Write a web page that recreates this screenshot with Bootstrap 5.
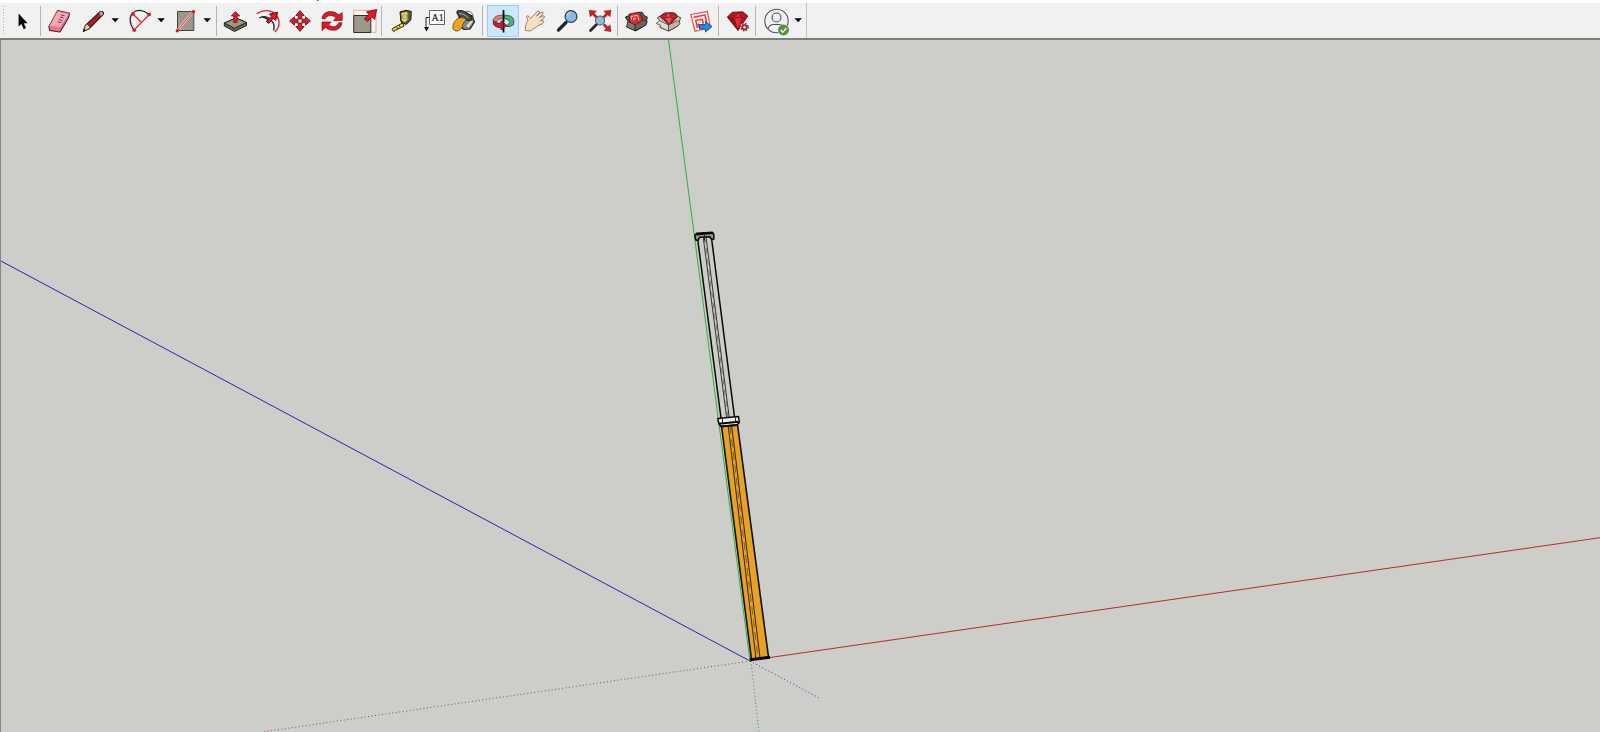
<!DOCTYPE html>
<html lang="en">
<head>
<meta charset="utf-8">
<meta name="viewport" content="width=device-width, initial-scale=1">
<title>3D modeling workspace</title>
<link href="https://cdn.jsdelivr.net/npm/bootstrap@5.3.0/dist/css/bootstrap.min.css" rel="stylesheet">
<style>
body{background:#cdcdc9;font-family:"Liberation Sans",sans-serif}
.topstrip{height:3px;background:#fff}
.toolbar{height:37px;background:#f1f1f1;border-bottom:2px solid #7d7d7c}
.grip{width:6px;height:31px;background:radial-gradient(circle,#aaa 0 .8px,transparent 1px) 2px 0/3px 3px repeat-y}
.tool{width:32px;height:32px;padding:0;border:0;border-radius:0;flex:none;background:transparent;line-height:0}
.tool.spaced{margin-left:1px}
.tool.active{background:#cce6fc;box-shadow:inset 0 0 0 1px #9dcdf5}
.drop{width:14px;height:32px;padding:0;border:0;flex:none;background:transparent;line-height:0}
.rule{width:5px;height:30px;flex:none;background:linear-gradient(#b5b5b5,#b5b5b5) 2px 0/1px 100% no-repeat}
.rule.wide{width:7px}
.tail{width:3px;height:35px;border-right:1px solid #c3c3c3}
.view{height:692px;border-left:1px solid #858585}
svg{display:block}
</style>
</head>
<body class="overflow-hidden vh-100 d-flex flex-column">
<svg width="0" height="0" class="position-absolute"><defs>
<symbol id="caret" viewBox="0 0 14 32"><path d="M3.500 13.200h7.400L7.200 17.200z" fill="#000"/></symbol>
<path id="arrowUp" d="M0-10.5 4.200-5.500H1.800V-2H-1.800V-5.500H-4.200z"/>
</defs></svg>
<div class="topstrip flex-shrink-0"><svg width="400" height="3"><path d="M317 0h1.500v1H317z" fill="#555"/></svg></div>
<header class="toolbar d-flex align-items-center flex-shrink-0" role="toolbar">
<div class="grip"></div>
<button class="tool" aria-label="Select"><svg width="32" height="32" viewBox="6 5 32 32"><path d="M18.600 13.500V26.600L21.400 24 23.800 29.200 26 28 23.700 23.200H27.500z"/></svg></button>
<div class="rule"></div>
<button class="tool" aria-label="Eraser"><svg width="32" height="32" viewBox="43 5 32 32" stroke="#56242f" stroke-linejoin="round"><path d="M49 26.500 57.500 10.700 69.700 13.400 68.300 18 60 32 49.600 30.400z" fill="#f4738b" stroke-width="1.200"/><path d="M49.400 26.300 57.500 11 69.300 13.700 60.500 27.700z" fill="#fba6b5" stroke="#c8667a" stroke-width=".6"/><path d="M57.500 22l4 .6M58.700 19.700l4 .8M60 17.400q2.500-1 3.500 1M61 15l3.500.6" fill="none" stroke-width=".8"/></svg></button>
<button class="tool spaced" aria-label="Line"><svg width="32" height="32" viewBox="76 5 32 32" stroke-linejoin="round"><path d="M83.400 31.300 85.400 25.500 100 11.800Q103.700 10.600 103.500 14L88.800 29z" fill="#bf1921" stroke="#32211d" stroke-width="1.200"/><path d="M83.400 31.300 85.400 25.500 87 24 90.100 27.200 88.700 29z" fill="#dfd19d" stroke="#48433a" stroke-width=".8"/><path d="m83 31.800 1-3 2 1.800z"/><path d="m99 13 2.800-1.500 1.200 2.400-1.800 2z" fill="#b9a9aa"/></svg></button>
<button class="drop" aria-label="Line options"><svg width="14" height="32"><use href="#caret"/></svg></button>
<button class="tool" aria-label="Arc"><svg width="32" height="32" viewBox="122 5 32 32" fill="none"><path d="M134 30C123.500 15.500 136.500 4 149 14.500" stroke="#222" stroke-width="1.200"/><path d="M133 14 141 22M134 30.200 149.300 14.500" stroke="#e01b28" stroke-width="1.200"/><g fill="#e51420"><circle cx="133" cy="13.900" r="1.800"/><circle cx="149.300" cy="14.500" r="1.800"/><circle cx="134.300" cy="30.300" r="1.800"/></g></svg></button>
<button class="drop" aria-label="Arc options"><svg width="14" height="32"><use href="#caret"/></svg></button>
<button class="tool" aria-label="Rectangle"><svg width="32" height="32" viewBox="168 5 32 32"><path d="M177.500 11.500h16.300v19h-16.300z" fill="#9b9a88" stroke="#444"/><path d="M177.500 30.500 193 11.500" stroke="#f8c5bf" stroke-width="2.600"/><path d="M177.500 30.500 193 11.500" stroke="#d9363a"/><g fill="#e51420"><circle cx="177.300" cy="30.700" r="1.700"/><circle cx="193.300" cy="11.700" r="1.800"/></g></svg></button>
<button class="drop" aria-label="Shape options"><svg width="14" height="32"><use href="#caret"/></svg></button>
<div class="rule"></div>
<button class="tool" aria-label="Push/Pull"><svg width="32" height="32" viewBox="219 5 32 32" stroke="#262620" stroke-linejoin="round"><path d="M224.300 23 236 18 246.500 22.500V25.500L234.500 31.500 224.300 26z" fill="#626252"/><path d="M224.300 23 236 18 246.500 22.500 234.500 28.200z" fill="#9a9986"/><path d="M235.500 11.500 239.800 16H237.200V22.500H233.600V16H231.200z" fill="#e21822" stroke="#761313" stroke-width=".7"/></svg></button>
<button class="tool" aria-label="Offset"><svg width="32" height="32" viewBox="251 5 32 32" fill="none"><path d="M256.800 13.800C264 9 272 10 276 15 280.500 20.500 280 27 275 32" stroke="#e41d28" stroke-width="1.300"/><path d="M259.300 18C265 15 270.500 18 270.500 21M270 20C275 22.500 274.500 27 273.500 30.500M262.500 17C267 18 269 20.500 268.500 23" stroke="#222" stroke-width="1.300"/><path d="m266.300 21.300 5.200-5-2-2.200 8.200-1.900-2 8.200-2.200-2-5 5z" fill="#e21822" stroke="#441010" stroke-width=".9"/></svg></button>
<button class="tool" aria-label="Move"><svg width="32" height="32" viewBox="283 5 32 32"><g transform="translate(300 21)" fill="#e21822" stroke="#541517" stroke-width=".8" stroke-linejoin="round"><use href="#arrowUp"/><use href="#arrowUp" transform="rotate(90)"/><use href="#arrowUp" transform="rotate(180)"/><use href="#arrowUp" transform="rotate(270)"/></g></svg></button>
<button class="tool" aria-label="Rotate"><svg width="32" height="32" viewBox="315 5 32 32" fill="#e21822" stroke="#641518" stroke-width=".7" stroke-linejoin="round"><path d="M322 18.500C323 10.500 333 9.500 339 15L342.200 12.500V20.500H333.500L336 17.700C332 14.500 327 15 325 19z"/><path d="M342 22.700C341 31 331 32.300 325.500 27.500L322 30.500V22H331L328.500 24.800C332.500 28 337 27 339 22.700z"/></svg></button>
<button class="tool" aria-label="Scale"><svg width="32" height="32" viewBox="347 5 32 32"><path d="M353.700 10.300h22.300v22h-22.300z" fill="#fdf5f4" stroke="#f09a9c" stroke-width=".9"/><path d="M353.800 15.500h17v17h-17z" fill="#9b9987" stroke="#30302a"/><path d="m364.200 18.700 4.800-4.300-2.600-2.600 10.300-2.300-2 10-2.500-2.500-4.800 4.500z" fill="#e21822" stroke="#561314" stroke-width=".8"/></svg></button>
<div class="rule"></div>
<button class="tool" aria-label="Tape measure"><svg width="32" height="32" viewBox="384 5 32 32" stroke-linejoin="round"><path d="m392.500 28.500 10-5.500 1.700 3-9.500 4.500-.5 1.200-2.200-2z" fill="#f0de25" stroke="#272410"/><path d="m396.500 26.500 1.300 2.500m1.200-4 1.200 2.500" stroke="#333" stroke-width=".8"/><path d="m400 12 6-1.700 5.300 1.200-.5 8.300-4.500 4.700-5.300-2.500z" fill="#5a594e" stroke="#151512"/><path d="m401.300 13 6-1 .2 7.500-2.500 2.800-3-1.800z" fill="#f0e32f"/><circle cx="404.600" cy="16.800" r="2.300" fill="#c9c59a" stroke="#77723a" stroke-width=".5"/></svg></button>
<button class="tool" aria-label="Text"><svg width="32" height="32" viewBox="416 5 32 32"><path d="M429.500 10.500h15v14h-15z" fill="#fff" stroke="#666"/><path d="M429 17.500h-3v10" fill="none" stroke="#222"/><path d="M424 27h5l-2.500 4.500z"/><text x="431.500" y="20.700" font-family="Liberation Serif,serif" font-size="10" stroke="#222" stroke-width=".2" fill="#222">A1</text></svg></button>
<button class="tool" aria-label="Paint bucket"><svg width="32" height="32" viewBox="448 5 32 32" stroke-linejoin="round"><path d="M459 13 472 15.500 474.500 22 470 29 464 29.500 459 25z" fill="#85847a" stroke="#1c1c19" stroke-width="1.200"/><path d="m466 26 6-6.500.8 2-4 6z" fill="#dddcd3"/><ellipse cx="464.500" cy="15.500" rx="8.500" ry="3.600" transform="rotate(28 464.500 15.500)" fill="#4b4d45" stroke="#222"/><path d="M459 14c2-1 7 1 9 4" fill="none" stroke="#b3b3a9"/><path d="M466 20C463 22 463 25 461.500 28 459.500 31.500 455 32 453 29 452.500 24 454.500 20.500 458 18.500 461 17 465 17.500 466 20z" fill="#f4a51f" stroke="#5a401b" stroke-width=".8"/><path d="M466 11.500c5-1.500 8.500 3 6.500 9" fill="none" stroke="#666"/></svg></button>
<div class="rule wide"></div>
<button class="tool active" aria-label="Orbit"><svg width="32" height="32" viewBox="487 5 32 32" stroke-linejoin="round"><path d="M503.500 10v12" stroke="#111" stroke-width="1.800"/><path d="M504.500 15.200C511 15.200 513.700 17.500 513.700 20.500V24.500L510 26.500H506.500L509.800 22.500Q509.800 19.500 504.500 18.500z" fill="#52b071" stroke="#164f2c" stroke-width=".8"/><path d="M502.500 15.200C496 15.200 493.300 17.500 493.300 20.500L496.500 22Q497 19 502.500 18.500z" fill="#dd817d" stroke="#6f2928" stroke-width=".7"/><path d="M493.300 20.500C494 22.500 497 23.200 501 23.200V20.700L507 25.500 501 30V27.700C496 27.500 493.300 25.500 493.300 23z" fill="#c7202a" stroke="#5c171b" stroke-width=".8"/><path d="M503.500 28v4.500" stroke="#111" stroke-width="1.800"/><path d="M503.500 13v15" stroke="#111" stroke-opacity=".65" stroke-width="1.300"/></svg></button>
<button class="tool" aria-label="Pan"><svg width="32" height="32" viewBox="519 5 32 32"><path d="M525.500 30.500C525 27 525.500 24 528 20.500L526.500 17Q527 14.500 529 16.500L530.500 18.500 537.500 11.300Q540 10.500 539.500 12.700L536.500 16 541 12.500Q544 11.500 543 14L539.500 17.500 543 15.800Q545.500 16 544 18L540.500 20.700 543 20.500Q544.500 22 542.500 23.500L537.500 26C535 28.500 533 28.500 531 31z" fill="#f5dfbd" stroke="#7c6a56" stroke-width=".8" stroke-linejoin="round"/></svg></button>
<button class="tool" aria-label="Zoom"><svg width="32" height="32" viewBox="551 5 32 32"><path d="m558.500 30 7.500-7.500" stroke="#20262b" stroke-width="3.300" stroke-linecap="round"/><circle cx="571" cy="16.500" r="5.900" fill="#8abae4" stroke="#333c47" stroke-width="1.200"/><path d="M567.500 15q1-2.500 3.500-2.500" fill="none" stroke="#b8d7f1" stroke-width="1.300"/></svg></button>
<button class="tool" aria-label="Zoom extents"><svg width="32" height="32" viewBox="583 5 32 32"><path d="m590.500 30.500 6-6" stroke="#222a30" stroke-width="2.800" stroke-linecap="round"/><circle cx="600" cy="20.500" r="4.500" fill="#8dbce3" stroke="#49515a"/><g fill="#dc1824" stroke="#681517" stroke-width=".5"><path d="m589.200 10.200 7.200 1-2.300 2 3.300 3.300-1.600 1.500-3.300-3.300-2.300 2zM611 10.200l-7.200 1 2.300 2-3.300 3.300 1.600 1.500 3.300-3.300 2.300 2zM611 31.500l-7-1 2.200-2-3.200-3.300 1.600-1.500 3.300 3.300 2.200-2z"/></g></svg></button>
<div class="rule"></div>
<button class="tool" aria-label="3D Warehouse"><svg width="32" height="32" viewBox="620 5 32 32" stroke-linejoin="round"><path d="m625.300 17 4-1.500 12.500-3.500 3.500 4.500 2 .5-1.500 8-10 6-9-4 1.500-5z" fill="#5f594b" stroke="#211d18" stroke-width=".9"/><path d="m629 14 10.500-2 3.500 9-8.500 4.500-5-3z" fill="#dc2a30" stroke="#561719" stroke-width=".8"/><path d="m631.500 19.500-.5-3 6.500-1.200 1.500 5M634 20.500l-.3-2 2.300-.4" fill="none" stroke="#fbc8bd"/><path d="m628 21.500 7 3.300v6l-8.500-4z" fill="#80796a" stroke="#2c271f" stroke-width=".8"/><path d="m635 24.800 8.500-5 3.800 2-1.800 3.500-10.500 5.500z" fill="#6b6454" stroke="#2c271f" stroke-width=".8"/></svg></button>
<button class="tool" aria-label="Extension Warehouse"><svg width="32" height="32" viewBox="652 5 32 32" stroke-linejoin="round"><path d="m657.500 17.500 5-2.500 12.500-2 3.500 4 2 .5-2 8-9.500 5.500-9-3.500 1-4.500z" fill="#c9c5b9" stroke="#3a3834" stroke-width=".9"/><path d="m660 16.500 4.500-3.500 8.500-.3 4.500 3.800-8 8.700z" fill="#c91b26" stroke="#4b1014" stroke-width=".9"/><path d="m660 16.500 4.500 1 5 7.500 3-7.500 5-1M664.500 17.500l4-4.500 4 4.500z" fill="#e8525a" stroke="#831318" stroke-width=".6"/><path d="m659.500 20.500 9 4.500v6l-8-3.500-.3-2.500-4-1.500z" fill="#dedbd0" stroke="#444139" stroke-width=".8"/><path d="m668.500 25 9-4.500 2.700 2.500-2.200 3-9.500 5z" fill="#bbb6a9" stroke="#444139" stroke-width=".8"/></svg></button>
<button class="tool" aria-label="Send to LayOut"><svg width="32" height="32" viewBox="684 5 32 32"><path d="m690.800 14.500 16.500-3 3.200 16-15.500 3.800z" fill="#fff0ed" stroke="#ed4b52" stroke-width="1.200"/><path d="m693.500 17.200 11.500-2.200 1.700 7.500M697.500 28l-1.700-7.500 6.500-1.200 1 4.500m-4 3.700-1-4" fill="none" stroke="#ed343d" stroke-width="1.500"/><path d="M699.500 24.500h6v-3l6.500 5-6.500 5.500v-3h-6z" fill="#238bdd" stroke="#194b78" stroke-linejoin="round" stroke-width=".9"/></svg></button>
<div class="rule"></div>
<button class="tool" aria-label="Extension Manager"><svg width="32" height="32" viewBox="721 5 32 32" stroke-linejoin="round"><path d="m727.300 17 5-4.700 10.500-.5 5 4.200-9.800 14.500z" fill="#b61520" stroke="#54131a" stroke-width=".9"/><path d="m728 17 6 1 4 12 4-12.500 5.500-1.200M734 18l4-5 4 4.500z" fill="#e32c38" stroke="#7a111b" stroke-width=".6"/><path d="m728 17 6 1 4 12z" fill="#90101a"/><g transform="translate(744.500 27.300)"><circle r="4.300" fill="#f1e4e4"/><circle r="3" fill="#a1242e"/><circle r="3.600" fill="none" stroke="#741722" stroke-width="1.300" stroke-dasharray="1.500 1.330"/><circle r="1.200" fill="#f9eeee"/></g></svg></button>
<div class="rule"></div>
<button class="tool" aria-label="Account"><svg width="32" height="32" viewBox="758 5 32 32"><g fill="none" stroke="#49515e" stroke-width="1.100"><circle cx="776.500" cy="21" r="11.700"/><circle cx="776.500" cy="17.500" r="4.500"/><path d="M768 29Q769 24.500 774 24.500h5q5 0 6 4.500"/></g><circle cx="783.500" cy="30" r="5.700" fill="#57933c" stroke="#f1f1f1" stroke-width=".5"/><path d="m780.700 30 2 2.200 3.600-4" fill="none" stroke="#fff" stroke-width="1.300"/></svg></button>
<button class="drop" aria-label="Account options"><svg width="14" height="32" viewBox="-1 0 14 32"><path d="M3.500 13.200h7.400L7.200 17.200z"/></svg></button>
<div class="tail"></div>
</header>
<main class="view flex-shrink-0">
<svg width="1599" height="692" viewBox="1 40 1599 692" fill="none">
<!-- Model axes -->
<path d="M0 260.500 750 661" stroke="#2626b5"/>
<path d="M668.500 40 694.500 237 750 661" stroke="#2cb632"/>
<path d="M768 657.800 1600 537.700" stroke="#ba2a2c"/>
<g stroke-dasharray="1 2.500"><path d="M750 661 262 732" stroke="#9c4a45"/><path d="m750 661 71 38" stroke="#3c3ca8"/><path d="m751 661 8 71" stroke="#2fa034"/></g>
<!-- Upper tube -->
<path d="m697 238 24.500 180 13-1L711.500 238z" fill="#cbcdc8"/>
<path d="m697.500 238 23.500 180M711.500 238 734.500 417" stroke="#080808" stroke-width="1.500"/>
<path d="m703.200 237 23.500 181M706 237 729.300 418" stroke="#222" stroke-width=".9"/>
<path d="m704.600 237 23.500 181" stroke="#444" stroke-width=".6" stroke-dasharray="6 5"/>
<path d="m694.800 235 2.200-1.800 15.500-.9 1.300 2.200v4.500l-2 .5-2-2.700-10 .5-2 3.200-2-.5z" fill="#999" stroke="#080808" stroke-width="1.500" stroke-linejoin="round"/>
<path d="m696 234.300 17-1.300" stroke="#080808" stroke-width="2.200"/><path d="M704.500 235v6" stroke="#222"/>
<!-- Lower tube -->
<path d="m721.500 426 16-1.500L768.500 657l-17 2.500z" fill="#e7a123" stroke="#111006" stroke-width="1.600"/>
<path d="m728.200 426 27.800 233M731.700 426 760 658" stroke="#302306" stroke-width="1"/>
<path d="m730 426 28 232" stroke="#5a4210" stroke-width=".7" stroke-dasharray="8 5"/>
<path d="m717.800 418.500 20.700-2 .8 6-2.500 2.500-16 1.500-2-3z" fill="#eeeeea" stroke="#080808" stroke-width="1.500" stroke-linejoin="round"/>
<path d="m719 423.700 19.500-2M721 426.500l16-1.500" stroke="#080808" stroke-width="2"/>
<path d="M735.500 417.500v5m-13-3.500v4" stroke="#222"/>
<path d="m750 659.800 20-2.500" stroke="#080805" stroke-width="3"/>
</svg>
</main>
<script src="https://cdn.jsdelivr.net/npm/bootstrap@5.3.0/dist/js/bootstrap.bundle.min.js"></script>
</body>
</html>
